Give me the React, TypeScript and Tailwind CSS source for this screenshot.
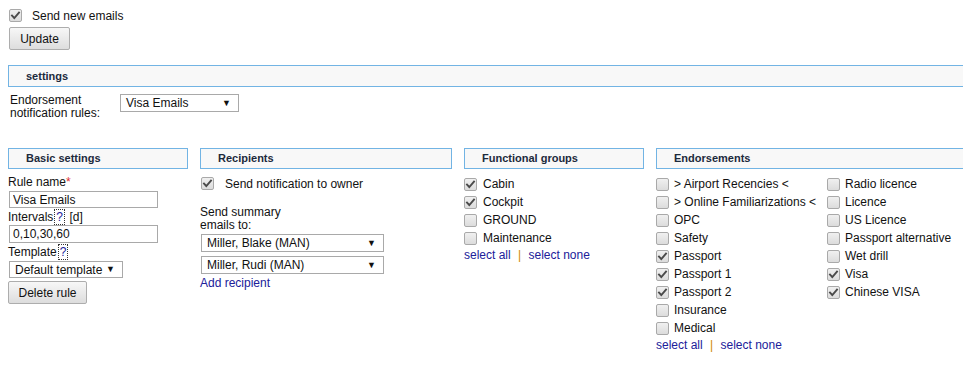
import React from 'react';

// faux windows-style controls, drawn by hand so the headless browser matches
function Box({ checked = false }: { checked?: boolean }) {
  return (
    <span className="inline-flex w-[13px] h-[13px] shrink-0 items-center justify-center rounded-[2px] border border-[#a9a9a9] bg-gradient-to-b from-[#f0f0f0] to-[#dcdcdc]">
      {checked && (
        <svg width="11" height="11" viewBox="0 0 11 11">
          <path d="M2 5.6 L4.3 8 L9 2.6" fill="none" stroke="#4a4a4a" strokeWidth="1.9" strokeLinecap="square" />
        </svg>
      )}
    </span>
  );
}

function Select({ value, className }: { value: string; className: string }) {
  return (
    <div className={`flex items-center justify-between border border-[#a9a9a9] bg-white pl-[5px] pr-[7px] text-[12px] text-[#111] ${className}`}>
      <span>{value}</span>
      <span className="text-[9px] leading-none">▼</span>
    </div>
  );
}

function Btn({ label, className }: { label: string; className: string }) {
  return (
    <button className={`flex items-center justify-center rounded-[2px] border border-[#adadad] bg-gradient-to-b from-[#f7f7f7] to-[#dddddd] text-[12px] text-[#111] ${className}`}>
      {label}
    </button>
  );
}

function Header({ title, className = '' }: { title: string; className?: string }) {
  return (
    <div className={`flex h-[21px] items-center border border-[#72b4e4] bg-[#f8f8f8] pl-[17px] text-[11px] font-bold text-[#1c2a3c] ${className}`}>
      {title}
    </div>
  );
}

function Help() {
  return <span className="mx-[1px] border border-dotted border-[#333] px-[1px] leading-[12px] text-[#20209a]">?</span>;
}

function CheckRow({ label, checked, gap }: { label: string; checked?: boolean; gap: string }) {
  return (
    <div className={`flex h-[18px] items-center ${gap}`}>
      <Box checked={checked} />
      <span className="whitespace-nowrap">{label}</span>
    </div>
  );
}

function SelectLinks() {
  return (
    <div className="leading-[14px] text-[#20209a]">
      select all <span className="mx-[4px] text-[#d08a00]">|</span> select none
    </div>
  );
}

const groups: [string, boolean][] = [
  ['Cabin', true],
  ['Cockpit', true],
  ['GROUND', false],
  ['Maintenance', false],
];

const endorseLeft: [string, boolean][] = [
  ['> Airport Recencies <', false],
  ['> Online Familiarizations <', false],
  ['OPC', false],
  ['Safety', false],
  ['Passport', true],
  ['Passport 1', true],
  ['Passport 2', true],
  ['Insurance', false],
  ['Medical', false],
];

const endorseRight: [string, boolean][] = [
  ['Radio licence', false],
  ['Licence', false],
  ['US Licence', false],
  ['Passport alternative', false],
  ['Wet drill', false],
  ['Visa', true],
  ['Chinese VISA', true],
];

export default function App() {
  return (
    <div className="h-[380px] w-[963px] overflow-hidden bg-white font-['Liberation_Sans',Arial,sans-serif] text-[12px] text-[#111]">
      <div className="w-[1010px] pl-2 pt-[9px]">
        <div className="flex h-[13px] items-center gap-[10px] pl-[1px]">
          <Box checked />
          <span>Send new emails</span>
        </div>
        <Btn label="Update" className="mt-[5px] ml-[1px] h-[23px] w-[61px]" />

        <div className="mt-[15px] flex h-[22px] w-[1000px] items-center border border-[#72b4e4] bg-[#f8f8f8] pl-[17px] text-[11px] font-bold text-[#1c2a3c]">
          settings
        </div>

        <div className="mt-[7px] flex items-start">
          <div className="w-[112px] pl-[2px] leading-[13px]">
            Endorsement
            <br />
            notification rules:
          </div>
          <Select value="Visa Emails" className="h-[18px] w-[119px]" />
        </div>

        {/* four columns */}
        <div className="mt-[28px] flex items-start gap-[12px]">
          <div className="w-[180px]">
            <Header title="Basic settings" />
            <div className="mt-[6px] leading-[15px]">
              Rule name<span className="text-[#e03030]">*</span>
            </div>
            <input readOnly value="Visa Emails" className="mt-[1px] ml-[1px] block h-[17px] w-[149px] border border-[#a9a9a9] px-[3px] text-[12px] outline-none" />
            <div className="mt-[2px] leading-[15px]">
              Intervals<Help /> [d]
            </div>
            <input readOnly value="0,10,30,60" className="ml-[1px] block h-[18px] w-[149px] border border-[#a9a9a9] px-[3px] text-[12px] outline-none" />
            <div className="mt-[2px] leading-[15px]">
              Template<Help />
            </div>
            <Select value="Default template" className="mt-[1px] ml-[1px] h-[17px] w-[114px]" />
            <Btn label="Delete rule" className="mt-[3px] h-[23px] w-[79px]" />
          </div>

          <div className="w-[252px]">
            <Header title="Recipients" />
            <div className="mt-[8px] flex h-[13px] items-center gap-[11px] pl-[1px]">
              <Box checked />
              <span>Send notification to owner</span>
            </div>
            <div className="mt-[16px] leading-[13px]">
              Send summary
              <br />
              emails to:
            </div>
            <Select value="Miller, Blake (MAN)" className="mt-[2px] ml-[1px] h-[18px] w-[183px]" />
            <Select value="Miller, Rudi (MAN)" className="mt-[4px] ml-[1px] h-[18px] w-[183px]" />
            <div className="mt-[2px] leading-[14px] text-[#20209a]">Add recipient</div>
          </div>

          <div className="w-[180px]">
            <Header title="Functional groups" />
            <div className="mt-[6px]">
              {groups.map(([g, c]) => (
                <CheckRow key={g} label={g} checked={c} gap="gap-[6px]" />
              ))}
            </div>
            <div className="mt-[1px]">
              <SelectLinks />
            </div>
          </div>

          <div className="w-[340px]">
            <Header title="Endorsements" />
            <div className="mt-[6px] flex items-start">
              <div className="w-[171px]">
                {endorseLeft.map(([e, c]) => (
                  <CheckRow key={e} label={e} checked={c} gap="gap-[5px]" />
                ))}
              </div>
              <div>
                {endorseRight.map(([e, c]) => (
                  <CheckRow key={e} label={e} checked={c} gap="gap-[5px]" />
                ))}
              </div>
            </div>
            <div className="mt-[1px]">
              <SelectLinks />
            </div>
          </div>
        </div>
      </div>
    </div>
  );
}
